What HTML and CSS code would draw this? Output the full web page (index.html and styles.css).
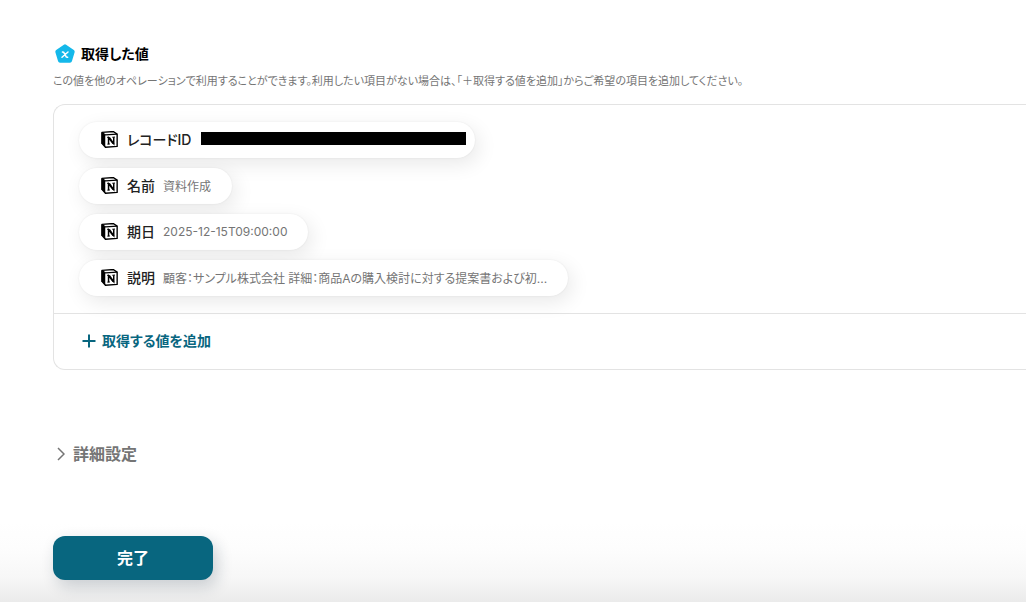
FILE: index.html
```
<!DOCTYPE html>
<html lang="ja">
<head>
  <meta charset="UTF-8">
  <title>取得した値</title>
  <meta name="viewport" content="width=device-width, initial-scale=1.0">
  <link rel="stylesheet" href="styles.css">
</head>

<body>
  <svg class="defs" aria-hidden="true">
    <symbol id="notion" viewBox="0 0 16 16">
      <path d="M.9 1.3 11.5.5l3.7 2.4v11.6L4.2 15.3.9 11.6z" fill="#fff" stroke="#000" stroke-width="1.3" stroke-linejoin="round"/>
      <path d="M.5 1.3 4 3.7v11.6L.5 11.5z" fill="#000"/>
      <path d="M1 1.4 4.2 3.7l11-.8" fill="none" stroke="#000" stroke-width="1.2"/>
      <path d="M7.1 12.4V6.3l4.9 5.7V5.8" fill="none" stroke="#000" stroke-width="1.4"/>
      <path d="m6.2 5.9 2.4-.1 4.2 6.4h-1.9z" fill="#000"/>
      <path d="M5.9 6.1h2M6 12.4l2.4-.2M10.6 5.9l2.6-.2" stroke="#000" stroke-width=".9"/>
    </symbol>
  </svg>

  <main>
    <section>
      <h2 class="title">
        <svg width="24" height="24" viewBox="0 0 24 24" aria-hidden="true">
          <path d="M12 4.3 19.7 9.6 17 18.8H7L4.3 9.6z" fill="#14b8ea" stroke="#14b8ea" stroke-width="4" stroke-linejoin="round"/>
          <path d="m9.4 10 1.2.2 2.8 4.9 1.2.2M15 10l-6 5.2" fill="none" stroke="#fff" stroke-width="1.5" stroke-linecap="round" stroke-linejoin="round"/>
        </svg>
        取得した値
      </h2>
      <p class="note">この値を他のオペレーションで利用することができます。利用したい項目がない場合は、「＋取得する値を追加」からご希望の項目を追加してください。</p>

      <div class="card">
        <ul class="values">
          <li class="pill">
            <svg class="logo"><use href="#notion"/></svg>
            <span class="name">レコードID</span>
            <span class="mask"></span>
          </li>
          <li class="pill">
            <svg class="logo"><use href="#notion"/></svg>
            <span class="name">名前</span>
            <span class="value">資料作成</span>
          </li>
          <li class="pill">
            <svg class="logo"><use href="#notion"/></svg>
            <span class="name">期日</span>
            <span class="value">2025-12-15T09:00:00</span>
          </li>
          <li class="pill">
            <svg class="logo"><use href="#notion"/></svg>
            <span class="name">説明</span>
            <span class="value">顧客：サンプル株式会社 詳細：商品Aの購入検討に対する提案書および初...</span>
          </li>
        </ul>
        <div class="card-footer">
          <button type="button" class="add">
            <svg width="14" height="14" viewBox="0 0 14 14" aria-hidden="true">
              <path d="M7 .5v13M.5 7h13" stroke="currentColor" stroke-width="2"/>
            </svg>
            取得する値を追加
          </button>
        </div>
      </div>
    </section>

    <button type="button" class="advanced">
      <svg width="8" height="14" viewBox="0 0 8 14" aria-hidden="true">
        <path d="m1 1 6 6-6 6" fill="none" stroke="currentColor" stroke-width="1.5"/>
      </svg>
      詳細設定
    </button>

    <button type="button" class="done">完了</button>
  </main>
</body>
</html>
```
FILE: styles.css
```
:root {
  --accent: #08667f;
  --text: #222;
  --muted: #757575;
  --border: #e3e3e3;
}
* {
  box-sizing: border-box;
}
body {
  margin: 0;
  min-height: 100vh;
  font-family: Inter, "Noto Sans CJK JP", sans-serif;
  font-size: 14px;
  font-feature-settings: "palt";
  color: var(--text);
  background: linear-gradient(to top, #ebebeb, #f7f7f7 24px, #fdfdfd 54px, #fff 80px);
}
button {
  font: inherit;
  font-feature-settings: inherit;
  border: none;
  background: none;
  padding: 0;
  cursor: pointer;
}
.defs {
  display: none;
}
main {
  display: flex;
  flex-direction: column;
  align-items: flex-start;
  padding: 42px 0 22px 53px;
}
section {
  width: 100%;
}
.title {
  display: flex;
  align-items: center;
  gap: 4px;
  margin: 0;
  font-size: 14px;
  font-weight: 600;
  line-height: 24px;
  color: #000;
}
.note {
  margin: 6px 0 14px;
  font-size: 11px;
  line-height: 18px;
  color: var(--muted);
}
.card {
  border: 1px solid var(--border);
  border-right: none;
  border-radius: 12px 0 0 12px;
  overflow: hidden;
}
.values {
  display: flex;
  flex-direction: column;
  align-items: flex-start;
  gap: 10px;
  margin: 0;
  padding: 17px 25px;
  list-style: none;
}
.pill {
  display: flex;
  align-items: center;
  height: 36px;
  padding: 0 21px 2px 22px;
  border-radius: 18px;
  background: #fff;
  box-shadow: 0 0 2px rgba(0,0,0,.08), 4px 6px 20px rgba(0,0,0,.09);
}
.logo {
  width: 17px;
  height: 17px;
  margin-right: 9px;
}
.name {
  margin-right: 8px;
  font-weight: 500;
}
.value {
  font-size: 12px;
  color: var(--muted);
}
.mask {
  width: 265px;
  height: 13px;
  margin: 0 -12px 1px 2px;
  background: #000;
}
.card-footer {
  padding: 15px 28px 16px;
  border-top: 1px solid var(--border);
}
.add {
  display: flex;
  align-items: center;
  gap: 6px;
  font-weight: 600;
  line-height: 24px;
  color: var(--accent);
}
.advanced {
  display: flex;
  align-items: center;
  gap: 8px;
  margin-top: 72px;
  padding-left: 4px;
  font-size: 16px;
  font-weight: 600;
  line-height: 24px;
  color: var(--muted);
}
.done {
  width: 160px;
  height: 44px;
  margin-top: 70px;
  padding-bottom: 2px;
  border-radius: 12px;
  font-size: 16px;
  font-weight: 600;
  color: #fff;
  background: var(--accent);
  box-shadow: 4px 6px 16px rgba(20,40,60,.2);
}
.done:hover {
  background: #055469;
}
```
